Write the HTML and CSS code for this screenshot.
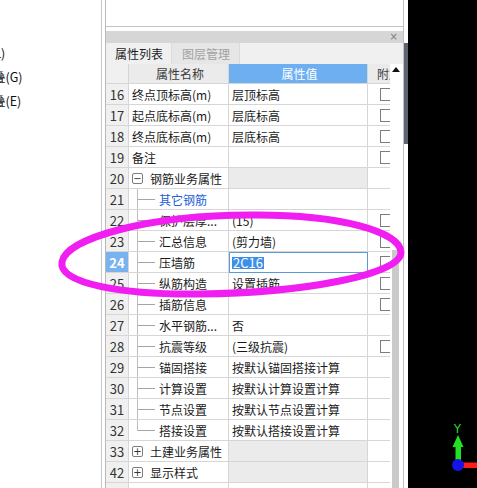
FILE: index.html
```html
<!DOCTYPE html>
<html>
<head>
<meta charset="utf-8">
<link rel="stylesheet" href="styles.css">
</head>
<body>
<div class="left">
  <div class="mi mi1">(L)</div>
  <div class="mi mi2">叠(G)</div>
  <div class="mi mi2">叠(E)</div>
</div>
<div class="vline"></div>
<div class="gap"></div>
<div class="panel">
  <div class="topbox"></div>
  <div class="titlebar"><span class="close">×</span></div>
  <div class="tabs">
    <div class="tab active">属性列表</div>
    <div class="tab">图层管理</div>
  </div>
  <div class="pbody">
    <div class="grid">
      <div class="h n"></div><div class="h k">属性名称</div><div class="h v">属性值</div><div class="h a">附加</div>

      <div class="n">16</div><div class="k">终点顶标高(m)</div><div class="v">层顶标高</div><div class="a"><span class="cb"></span></div>
      <div class="n">17</div><div class="k">起点底标高(m)</div><div class="v">层底标高</div><div class="a"><span class="cb"></span></div>
      <div class="n">18</div><div class="k">终点底标高(m)</div><div class="v">层底标高</div><div class="a"><span class="cb"></span></div>
      <div class="n">19</div><div class="k">备注</div><div class="v"></div><div class="a"><span class="cb"></span></div>
      <div class="n">20</div><div class="k"><span class="box">−</span><span class="gt">钢筋业务属性</span></div><div class="v grp"></div><div class="a"></div>
      <div class="n">21</div><div class="k"><span class="br"></span><span class="ct blue">其它钢筋</span></div><div class="v"></div><div class="a"></div>
      <div class="n">22</div><div class="k"><span class="br"></span><span class="ct">保护层厚...</span></div><div class="v">(15)</div><div class="a"><span class="cb"></span></div>
      <div class="n">23</div><div class="k"><span class="br"></span><span class="ct">汇总信息</span></div><div class="v">(剪力墙)</div><div class="a"><span class="cb"></span></div>
      <div class="n cur">24</div><div class="k"><span class="br"></span><span class="ct">压墙筋</span></div><div class="v edit"><span class="sel">2C16</span></div><div class="a"><span class="cb"></span></div>
      <div class="n">25</div><div class="k"><span class="br"></span><span class="ct">纵筋构造</span></div><div class="v">设置插筋</div><div class="a"><span class="cb"></span></div>
      <div class="n">26</div><div class="k"><span class="br"></span><span class="ct">插筋信息</span></div><div class="v"></div><div class="a"><span class="cb"></span></div>
      <div class="n">27</div><div class="k"><span class="br"></span><span class="ct">水平钢筋...</span></div><div class="v">否</div><div class="a"></div>
      <div class="n">28</div><div class="k"><span class="br"></span><span class="ct">抗震等级</span></div><div class="v">(三级抗震)</div><div class="a"><span class="cb"></span></div>
      <div class="n">29</div><div class="k"><span class="br"></span><span class="ct">锚固搭接</span></div><div class="v">按默认锚固搭接计算</div><div class="a"></div>
      <div class="n">30</div><div class="k"><span class="br"></span><span class="ct">计算设置</span></div><div class="v">按默认计算设置计算</div><div class="a"></div>
      <div class="n">31</div><div class="k"><span class="br"></span><span class="ct">节点设置</span></div><div class="v">按默认节点设置计算</div><div class="a"></div>
      <div class="n">32</div><div class="k"><span class="br last"></span><span class="ct">搭接设置</span></div><div class="v">按默认搭接设置计算</div><div class="a"></div>
      <div class="n">33</div><div class="k"><span class="box">+</span><span class="gt">土建业务属性</span></div><div class="v grp"></div><div class="a"></div>
      <div class="n">42</div><div class="k"><span class="box">+</span><span class="gt">显示样式</span></div><div class="v grp"></div><div class="a"></div>
      <div class="n"></div><div class="k"></div><div class="v"></div><div class="a"></div>
    </div>
    <div class="scroll">
      <div class="up"></div>
      <div class="thumb"></div>
    </div>
  </div>
</div>
<div class="strip"><div class="sthumb"></div></div>
<div class="view">
  <svg class="gizmo" width="37" height="56" viewBox="0 0 37 56">
    <text x="17.5" y="15" class="ylab">Y</text>
    <polygon points="18,17 12.5,29 23.5,29" fill="#22e022"/>
    <rect x="15.5" y="29" width="5.5" height="16" fill="#22e022"/>
    <rect x="23" y="44.5" width="14" height="5.5" fill="#ff1c1c"/>
    <circle cx="18" cy="47" r="6" fill="#1414e6"/>
  </svg>
</div>
<svg class="mark" width="477" height="488" viewBox="0 0 477 488">
  <path d="M62,262 C66,238 150,215 250,215 C340,214 400,232 401,252 C402,275 300,293 200,294 C125,295 58,284 62,262 Z" fill="none" stroke="#f01ef0" stroke-width="7"/>
</svg>
</body>
</html>
```
FILE: styles.css
```css
html, body {
  margin: 0;
  padding: 0;
}
body {
  width: 477px;
  height: 488px;
  overflow: hidden;
  display: flex;
  position: relative;
  background: #fff;
  font-family: "Noto Sans CJK SC", "Noto Sans", sans-serif;
  font-size: 12px;
  color: #1a1a1a;
}
.left {
  width: 101px;
  flex: none;
  padding-top: 41px;
  box-sizing: border-box;
  overflow: hidden;
}
.mi {
  height: 24px;
  line-height: 24px;
  white-space: nowrap;
  font-size: 12.5px;
  color: #111;
}
.mi1 { margin-left: -10px; }
.mi2 { margin-left: -7px; }
.vline {
  width: 1px;
  flex: none;
  background: #c9c9c9;
}
.gap {
  width: 3px;
  flex: none;
}
.panel {
  width: 299px;
  flex: none;
  box-sizing: border-box;
  border-left: 1px solid #b9b9b9;
  border-right: 1px solid #c2c2c2;
  display: flex;
  flex-direction: column;
}
.topbox {
  height: 27px;
  flex: none;
  box-sizing: border-box;
  border-bottom: 1px solid #c2c2c2;
  margin-bottom: 4px;
}
.titlebar {
  height: 12px;
  flex: none;
  background: #d6d6d6;
  display: flex;
  justify-content: flex-end;
  align-items: center;
}
.close {
  font-family: "DejaVu Sans", sans-serif;
  font-size: 10px;
  line-height: 12px;
  color: #7d7d7d;
  margin-right: 5px;
}
.tabs {
  height: 21px;
  flex: none;
  background: #f0f0f0;
  display: flex;
}
.tab {
  height: 21px;
  line-height: 21px;
  padding: 0 9px 0 10px;
  background: #e6e6e6;
  color: #a2a2a2;
  border-right: 1px solid #d9d9d9;
}
.tab.active {
  padding: 0 8px 0 9px;
  background: #f0f0f0;
  color: #1e1e1e;
  border-right: 1px solid #dcdcdc;
}
.pbody {
  flex: 1;
  display: flex;
  overflow: hidden;
}
.grid {
  width: 284px;
  flex: none;
  display: grid;
  grid-template-columns: 23px 100px 139px 22px;
  grid-template-rows: 20px;
  grid-auto-rows: 21px;
  align-content: start;
  overflow: hidden;
}
.grid > div {
  box-sizing: border-box;
  border-right: 1px solid #d6d6d6;
  border-bottom: 1px solid #d6d6d6;
  overflow: hidden;
  white-space: nowrap;
  display: flex;
  align-items: center;
  background: #fff;
}
.grid > .a {
  border-right: none;
}
.h.n { background: #f7f7f7; }
.h.k {
  background: #ebebeb;
  justify-content: center;
  color: #3a3a3a;
}
.h.v {
  background: #6eaff2;
  color: #fff;
  justify-content: center;
}
.h.a {
  background: #ebebeb;
  padding-left: 9px;
  color: #3a3a3a;
}
.grid > .n {
  background: #f0f0f0;
  justify-content: center;
  font-size: 13px;
  color: #333;
}
.grid > .n.cur {
  background: #78b3ef;
  color: #fff;
  font-weight: bold;
}
.grid > .k {
  padding-left: 3px;
}
.grid > .v {
  padding-left: 3px;
}
.grid > .v.grp {
  background: #ebebeb;
}
.grid > .v.edit {
  border: 1px solid #5c9ad6;
  padding-left: 2px;
}
.sel {
  background: #3d8fe8;
  color: #fff;
  font-size: 13px;
  line-height: 12px;
  padding: 0 1px;
}
.cb {
  width: 13px;
  height: 13px;
  flex: none;
  box-sizing: border-box;
  border: 1px solid #7c7c7c;
  background: #fff;
  margin-left: 12px;
}
.box {
  width: 11px;
  height: 11px;
  flex: none;
  box-sizing: border-box;
  border: 1px solid #7d7d7d;
  border-radius: 2px;
  font-family: "DejaVu Sans", sans-serif;
  font-size: 10px;
  line-height: 9px;
  text-align: center;
  color: #333;
}
.gt {
  margin-left: 7px;
}
.br {
  width: 18px;
  height: 20px;
  flex: none;
  margin-left: 5px;
  box-sizing: border-box;
  border-left: 1px solid #bdbdbd;
  background: linear-gradient(#a5a5a5, #a5a5a5) no-repeat 0 10px / 100% 1px;
  align-self: flex-start;
}
.br.last {
  height: 11px;
}
.ct {
  margin-left: 4px;
}
.blue {
  color: #2160d3;
}
.scroll {
  width: 13px;
  flex: none;
  display: flex;
  flex-direction: column;
  background: #fff;
}
.up {
  width: 0;
  height: 0;
  margin: 3px 0 0 2px;
  border-left: 4px solid transparent;
  border-right: 4px solid transparent;
  border-bottom: 5px solid #111;
}
.thumb {
  width: 7px;
  margin: 178px 0 0 2px;
  flex: 1;
  background: #cacaca;
}
.strip {
  width: 4px;
  flex: none;
  display: flex;
  flex-direction: column;
  background: #fff;
}
.sthumb {
  margin-top: 43px;
  height: 101px;
  background: #5d6573;
}
.view {
  flex: 1;
  background: #000;
  position: relative;
}
.gizmo {
  position: absolute;
  left: 32px;
  top: 418px;
}
.ylab {
  font-family: "DejaVu Sans", sans-serif;
  font-size: 12px;
  fill: #2ed82e;
  text-anchor: middle;
}
.mark {
  position: absolute;
  left: 0;
  top: 0;
  pointer-events: none;
}
```
